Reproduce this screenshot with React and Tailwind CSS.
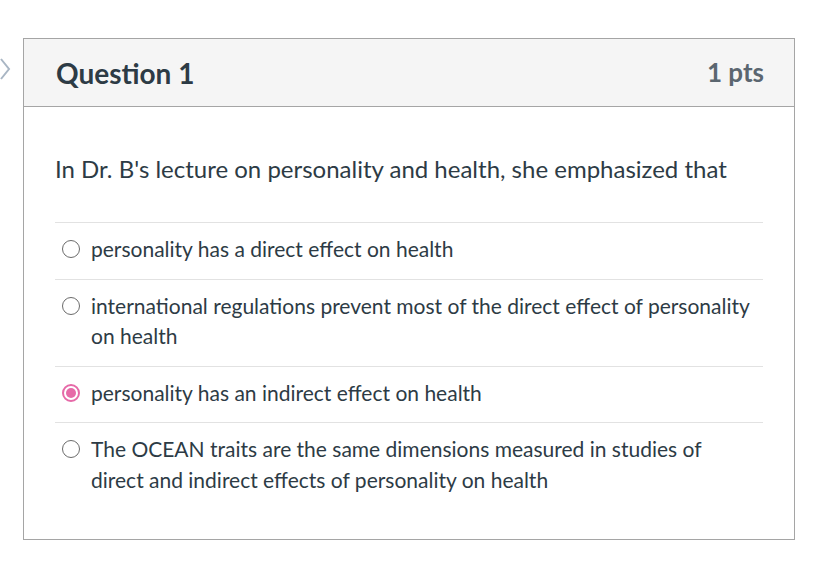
import React from 'react';

const options = [
    {text: "personality has a direct effect on health"},
    {text: "international regulations prevent most of the direct effect of personality on health"},
    {text: "personality has an indirect effect on health", checked: true},
    {text: "The OCEAN traits are the same dimensions measured in studies of direct and indirect effects of personality on health"},
];

const Radio = ({checked}) => (
    checked ? (
        <span className="mt-[6px] flex h-[18px] w-[18px] shrink-0 items-center justify-center rounded-full border-2 border-[#e66aa8]">
            <span className="h-[10px] w-[10px] rounded-full bg-[#e66aa8]"/>
        </span>
    ) : (
        <span className="mt-[6px] h-[18px] w-[18px] shrink-0 rounded-full border border-[#6b6b6b]"/>
    )
);

const App = () => {
    return (
        <div className="relative h-[562px] w-[830px] bg-white font-['Lato',sans-serif] text-[#2d3b45]">
            <svg className="absolute left-0 top-[58px]" width="12" height="22" viewBox="0 0 12 22">
                <path d="M1 1 L9 11 L1 21" fill="none" stroke="#a9b6c4" strokeWidth="2"/>
            </svg>
            <div className="pl-[23px] pt-[38px]">
                <div className="w-[772px] border border-[#a5a5a5]">
                    <div className="flex h-[68px] items-center justify-between border-b border-[#a5a5a5] bg-[#f5f5f5] pl-[32px] pr-[30px]">
                        <h2 className="text-[28px] font-bold">Question 1</h2>
                        <span className="text-[26px] font-bold text-[#5b6670]">1 pts</span>
                    </div>
                    <div className="px-[31px] pb-[30px] pt-[47px]">
                        <p className="text-[24px] leading-[30px]">In Dr. B's lecture on personality and health, she emphasized that</p>
                        <div className="mt-[38px]">
                            {options.map((option, index) => (
                                <div key={index} className="flex gap-[11px] border-t border-[#e2e2e2] pb-[14px] pl-[7px] pr-[10px] pt-[11px]">
                                    <Radio checked={option.checked}/>
                                    <span className="text-[21px] leading-[30.5px]">{option.text}</span>
                                </div>
                            ))}
                        </div>
                    </div>
                </div>
            </div>
        </div>
    );
};

export default App;
